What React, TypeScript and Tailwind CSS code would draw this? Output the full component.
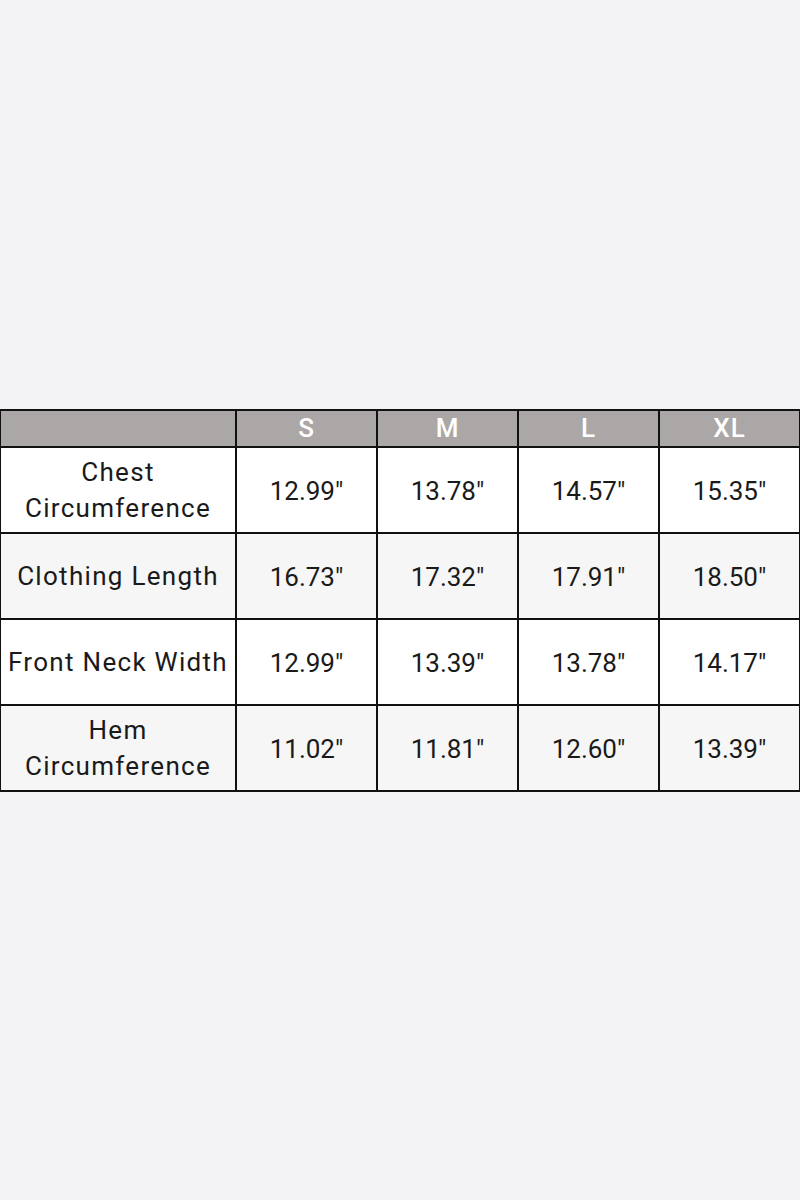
import React from 'react';

const sizes = ['S', 'M', 'L', 'XL'];

const rows: { label: React.ReactNode; values: string[] }[] = [
  { label: <>Chest<br />Circumference</>, values: ['12.99"', '13.78"', '14.57"', '15.35"'] },
  { label: 'Clothing Length', values: ['16.73"', '17.32"', '17.91"', '18.50"'] },
  { label: 'Front Neck Width', values: ['12.99"', '13.39"', '13.78"', '14.17"'] },
  { label: <>Hem<br />Circumference</>, values: ['11.02"', '11.81"', '12.60"', '13.39"'] },
];

export default function App() {
  return (
    <div className="min-h-screen w-full bg-[#f3f3f5] flex items-center justify-center font-['Roboto',sans-serif]">
      <table className="w-[800px] table-fixed border-collapse text-center text-[#1a1a1a]">
        <colgroup>
          <col className="w-[236px]" />
          <col className="w-[141px]" />
          <col className="w-[141px]" />
          <col className="w-[141px]" />
          <col className="w-[141px]" />
        </colgroup>
        <thead>
          <tr className="h-[37px] bg-[#aba7a6]">
            <th className="border-2 border-[#111]" />
            {sizes.map((s) => (
              <th key={s} className="border-2 border-[#111] text-[26px] font-medium leading-none tracking-[1px] text-white">
                {s}
              </th>
            ))}
          </tr>
        </thead>
        <tbody>
          {rows.map((row, i) => (
            <tr key={i} className={`h-[86px] ${i % 2 === 0 ? 'bg-white' : 'bg-[#f6f6f6]'}`}>
              <td className="border-2 border-[#111] px-0 text-[26px] leading-[36px] whitespace-nowrap tracking-[1.3px]">
                {row.label}
              </td>
              {row.values.map((v, j) => (
                <td key={j} className="border-2 border-[#111] pt-[2px] text-[26px] leading-none">
                  {v}
                </td>
              ))}
            </tr>
          ))}
        </tbody>
      </table>
    </div>
  );
}
